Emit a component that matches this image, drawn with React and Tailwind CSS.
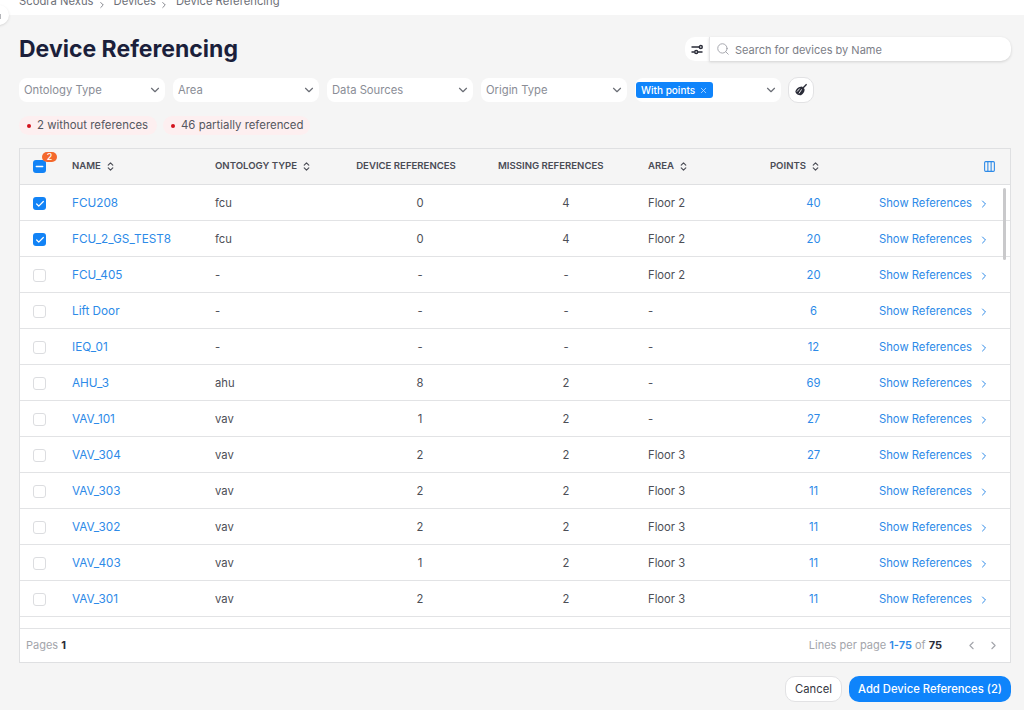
import { ChevronDown, ChevronRight, ChevronLeft, ChevronsUpDown, Search, X, Check, Minus, Columns3 } from 'lucide-react'

const font = { fontFamily: 'Inter, sans-serif' }

const rows = [
  ['FCU208', 'fcu', '0', '4', 'Floor 2', '40', true],
  ['FCU_2_GS_TEST8', 'fcu', '0', '4', 'Floor 2', '20', true],
  ['FCU_405', '-', '-', '-', 'Floor 2', '20'],
  ['Lift Door', '-', '-', '-', '-', '6'],
  ['IEQ_01', '-', '-', '-', '-', '12'],
  ['AHU_3', 'ahu', '8', '2', '-', '69'],
  ['VAV_101', 'vav', '1', '2', '-', '27'],
  ['VAV_304', 'vav', '2', '2', 'Floor 3', '27'],
  ['VAV_303', 'vav', '2', '2', 'Floor 3', '11'],
  ['VAV_302', 'vav', '2', '2', 'Floor 3', '11'],
  ['VAV_403', 'vav', '1', '2', 'Floor 3', '11'],
  ['VAV_301', 'vav', '2', '2', 'Floor 3', '11'],
]

const cols = 'grid grid-cols-[52px_143px_115px_180px_112px_138px_61px_1fr] items-center'

function Filter({ label, children }) {
  return (
    <div className="w-[146px] h-6 bg-white rounded-lg flex items-center justify-between pl-[5px] pr-[3px]">
      {children || <span className="text-[11.25px] text-[#8a8d96]">{label}</span>}
      <ChevronDown size={14} className="text-[#6b6e76]" />
    </div>
  )
}

function Sort({ children }) {
  return (
    <div className="flex items-center gap-[4px] text-[9.6px] font-semibold text-[#4a4c55] uppercase">
      {children}
      <ChevronsUpDown size={11} strokeWidth={2.5} />
    </div>
  )
}

function Badge({ width, children }) {
  return (
    <div className={`${width} h-[19px] bg-[#fdeff0] rounded-full flex items-center gap-[6px] pl-2 text-[11.4px] text-[#55575f]`}>
      <span className="w-1 h-1 rounded-full bg-[#d3121d]" />
      {children}
    </div>
  )
}

function Row({ row }) {
  const [name, type, refs, missing, area, points, checked] = row
  return (
    <div className={`${cols} h-9 pt-[2px] border-b border-[#e2e3e5] text-[11.25px] text-[#4c4e56]`}>
      <div className="pl-[13px]">
        {checked ? (
          <div className="w-[13px] h-[13px] rounded-[3px] bg-[#1283f6] flex items-center justify-center">
            <Check size={10} strokeWidth={3} className="text-white" />
          </div>
        ) : (
          <div className="w-[13px] h-[13px] rounded-[3px] bg-white border border-[#dcdde0]" />
        )}
      </div>
      <div className="text-[11.75px] text-[#2d8ae8]">{name}</div>
      <div>{type}</div>
      <div className="text-center">{refs}</div>
      <div className="text-center">{missing}</div>
      <div className="pl-[26px]">{area}</div>
      <div className="pl-[46px] text-center text-[#2d8ae8]">{points}</div>
      <div className="flex items-center justify-end gap-[6px] pr-[20px] text-[#2d8ae8]">
        Show References
        <ChevronRight size={12} />
      </div>
    </div>
  )
}

export default function App() {
  return (
    <div style={font} className="relative h-[710px] w-[1024px] overflow-hidden bg-[#f5f5f5]">
      <div className="h-[15px] bg-white flex items-end pl-[19px] pb-[5px] overflow-hidden text-[11.25px] text-[#6d6f77]">
        <span>Scodra Nexus</span>
        <ChevronRight size={10} className="ml-[3px] mr-[7px]" />
        <span>Devices</span>
        <ChevronRight size={10} className="ml-[3px] mr-[7px]" />
        <span>Device Referencing</span>
      </div>
      <div className="absolute -left-[11px] top-[5px] w-5 h-5 rounded-full bg-white shadow-sm" />
      <div className="absolute left-0 top-[14px] w-px h-[5px] bg-[#b5b6ba]" />

      <div className="px-[19px] pt-[22px]">
        <div className="flex items-center justify-between h-6">
          <h1 className="pt-px text-[23px] font-bold text-[#1b1f3b]">Device Referencing</h1>
          <div className="flex h-6 mr-[-6px]">
            <div className="w-6 bg-white rounded-l-[10px] flex items-center justify-center">
              <svg width="12" height="11" viewBox="0 0 12 11" fill="none" stroke="#2a2c38" strokeWidth="1.4">
                <path d="M0.5 3h7.5M0.5 8h3M7 8h4.5" />
                <circle cx="9.8" cy="3" r="1.5" />
                <circle cx="5.2" cy="8" r="1.5" />
              </svg>
            </div>
            <div className="w-[302px] bg-white rounded-r-[10px] border-l border-[#e4e4e6] shadow-[0_1px_3px_rgba(0,0,0,0.15)] flex items-center gap-[5px] pl-[6px] text-[11px] text-[#7c7e87]">
              <Search size={14} strokeWidth={1.5} className="text-[#9a9ca3]" />
              <span className="pt-[2px]">Search for devices by Name</span>
            </div>
          </div>
        </div>

        <div className="flex items-center gap-2 mt-[16px]">
          <Filter label="Ontology Type" />
          <Filter label="Area" />
          <Filter label="Data Sources" />
          <Filter label="Origin Type" />
          <Filter>
            <span className="-ml-1 h-[16px] bg-[#0f84fb] rounded-[3px] flex items-center gap-[4px] px-[5px] text-[10px] font-medium text-white">
              With points
              <X size={9} className="text-[#cfe5ff]" />
            </span>
          </Filter>
          <div className="w-[26px] h-[26px] ml-[-1px] bg-white rounded-[10px] border border-[#e2e2e4] flex items-center justify-center">
            <svg width="14" height="14" viewBox="0 0 14 14">
              <path d="M9 5 L12.6 1.2" stroke="#2a2c38" strokeWidth="1.3" fill="none" />
              <path d="M8 3.4 L10.6 6 C10.8 8.6 9.4 11 7 12.2 C5 12.6 2.4 11.4 1.4 9 C1.2 6.4 4.6 3.4 8 3.4 Z" fill="#2a2c38" />
              <path d="M7.6 6.4 L5 10.4 M5.6 5.6 L3 8.6" stroke="#ffffff" strokeWidth="0.9" fill="none" />
            </svg>
          </div>
        </div>

        <div className="flex gap-[6px] mt-[13px]">
          <Badge width="w-[138px]">2 without references</Badge>
          <Badge width="w-[147px]">46 partially referenced</Badge>
        </div>

        <div className="relative mt-[13px] h-[515px] bg-white border border-[#dfe0e2] flex flex-col mr-[-6px]">
          <div className={`${cols} h-9 shrink-0 bg-[#f5f5f5] border-b border-[#dfe0e2]`}>
            <div className="pl-[13px] relative">
              <div className="w-[13px] h-[13px] rounded-[3px] bg-[#1283f6] flex items-center justify-center">
                <Minus size={11} strokeWidth={3} className="text-white" />
              </div>
              <span className="absolute left-[22px] -top-[8px] w-[15px] h-[10px] rounded-full bg-[#f4682c] text-[9px] leading-[10px] font-medium text-white text-center">2</span>
            </div>
            <Sort>Name</Sort>
            <Sort>Ontology Type</Sort>
            <div className="pr-[28px] text-center text-[9.6px] font-semibold text-[#4a4c55] uppercase">Device References</div>
            <div className="-ml-[12px] text-[9.6px] font-semibold text-[#4a4c55] uppercase whitespace-nowrap">Missing References</div>
            <div className="pl-[26px]"><Sort>Area</Sort></div>
            <div className="flex justify-end"><Sort>Points</Sort></div>
            <div className="flex justify-end pr-[14px]">
              <Columns3 size={13} className="text-[#2d8ae8]" />
            </div>
          </div>
          <div className="relative flex-1 overflow-hidden">
            {rows.map(r => <Row key={r[0]} row={r} />)}
            <div className="absolute right-[4px] top-[3px] w-[3px] h-[72px] rounded-full bg-[#c9c9cb]" />
          </div>
          <div className="h-[34px] shrink-0 border-t border-[#e2e3e5] flex items-center justify-between pl-[6px] pr-[10px] text-[11px] text-[#a3a5ab]">
            <div>Pages <span className="font-bold text-[#2a2c38]">1</span></div>
            <div className="flex items-center">
              <span>Lines per page <span className="font-semibold text-[#2d8ae8]">1-75</span> of <span className="font-bold text-[#2a2c38]">75</span></span>
              <ChevronLeft size={13} className="ml-[23px] text-[#a3a5ab]" />
              <ChevronRight size={13} className="ml-[9px] text-[#a3a5ab]" />
            </div>
          </div>
        </div>

        <div className="flex justify-end gap-[7px] mt-[13px] mr-[-6px]">
          <button className="h-[26px] w-[57px] bg-white rounded-[10px] border border-[#e2e2e4] text-[11.25px] text-[#34363f]">Cancel</button>
          <button className="h-[26px] w-[162px] bg-[#0f84fb] rounded-[10px] text-[11.25px] font-medium text-white">Add Device References (2)</button>
        </div>
      </div>
    </div>
  )
}
